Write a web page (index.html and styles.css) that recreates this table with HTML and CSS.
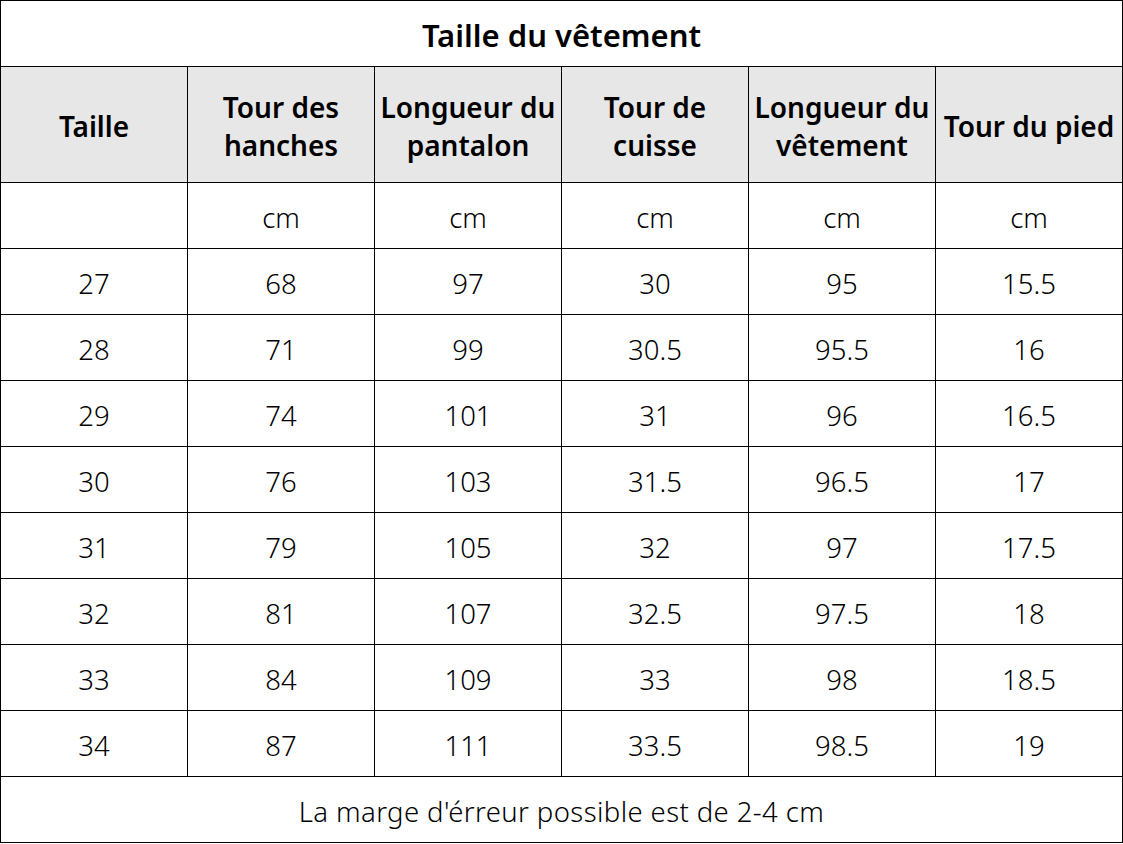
FILE: index.html
```html
<!DOCTYPE html>
<html>
<head>
<meta charset="utf-8">
<link rel="stylesheet" href="styles.css">
</head>
<body>
<table class="size-table">
  <colgroup>
    <col class="c1"><col class="c2"><col class="c3"><col class="c4"><col class="c5"><col class="c6">
  </colgroup>
  <tr class="title-row"><td colspan="6">Taille du vêtement</td></tr>
  <tr class="head-row">
    <td>Taille</td>
    <td>Tour des<br>hanches</td>
    <td>Longueur du<br>pantalon</td>
    <td>Tour de<br>cuisse</td>
    <td>Longueur du<br>vêtement</td>
    <td>Tour du pied</td>
  </tr>
  <tr class="data-row"><td></td><td>cm</td><td>cm</td><td>cm</td><td>cm</td><td>cm</td></tr>
  <tr class="data-row"><td>27</td><td>68</td><td>97</td><td>30</td><td>95</td><td>15.5</td></tr>
  <tr class="data-row"><td>28</td><td>71</td><td>99</td><td>30.5</td><td>95.5</td><td>16</td></tr>
  <tr class="data-row"><td>29</td><td>74</td><td>101</td><td>31</td><td>96</td><td>16.5</td></tr>
  <tr class="data-row"><td>30</td><td>76</td><td>103</td><td>31.5</td><td>96.5</td><td>17</td></tr>
  <tr class="data-row"><td>31</td><td>79</td><td>105</td><td>32</td><td>97</td><td>17.5</td></tr>
  <tr class="data-row"><td>32</td><td>81</td><td>107</td><td>32.5</td><td>97.5</td><td>18</td></tr>
  <tr class="data-row"><td>33</td><td>84</td><td>109</td><td>33</td><td>98</td><td>18.5</td></tr>
  <tr class="data-row"><td>34</td><td>87</td><td>111</td><td>33.5</td><td>98.5</td><td>19</td></tr>
  <tr class="foot-row"><td colspan="6">La marge d'érreur possible est de 2-4 cm</td></tr>
</table>
</body>
</html>
```
FILE: styles.css
```css
html, body {
  margin: 0;
  padding: 0;
  background: #ffffff;
}
.size-table {
  border-collapse: collapse;
  table-layout: fixed;
  width: 1122px;
  font-family: "Noto Sans", "Liberation Sans", sans-serif;
  color: #000;
}
.c1, .c2, .c3, .c4, .c5, .c6 { width: 187px; }
.size-table td {
  border: 1px solid #000;
  text-align: center;
  vertical-align: middle;
  padding: 0;
  box-sizing: border-box;
  white-space: nowrap;
}
.title-row td {
  height: 66px;
  font-weight: 600;
  font-size: 31px;
  padding-top: 3px;
}
.head-row td {
  height: 116px;
  background: #e7e7e7;
  font-weight: 600;
  font-size: 28px;
  line-height: 38px;
  padding-top: 2px;
}
.data-row td {
  height: 66px;
  font-size: 27.5px;
  font-weight: 300;
  padding-top: 4px;
}
.foot-row td {
  height: 66px;
  font-size: 27.5px;
  font-weight: 300;
  letter-spacing: 0.4px;
  padding-top: 4px;
}
```
